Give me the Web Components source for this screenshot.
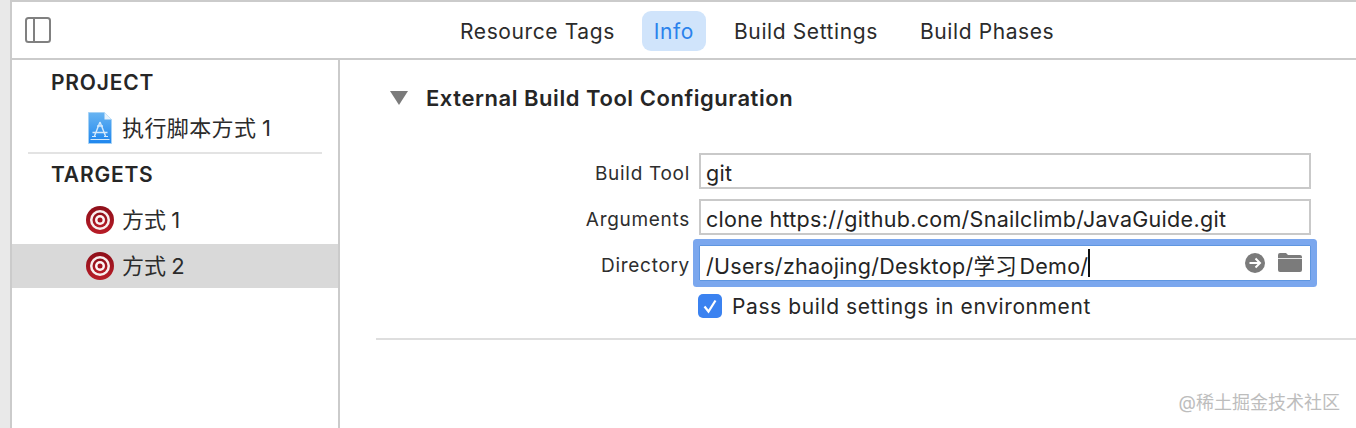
<!DOCTYPE html>
<html>
<head>
<meta charset="utf-8">
<style>
  html, body { margin: 0; padding: 0; height: 100%; background: #fff; }
  body { font-family: Inter, "Noto Sans CJK SC", sans-serif; color: #262626; overflow: hidden; }
</style>
</head>
<body>
<xcode-window>
  <tool-bar slot="toolbar">
    <tab-item>Resource Tags</tab-item>
    <tab-item selected>Info</tab-item>
    <tab-item>Build Settings</tab-item>
    <tab-item>Build Phases</tab-item>
  </tool-bar>
  <side-bar slot="sidebar">
    <side-heading>PROJECT</side-heading>
    <side-item icon="project">执行脚本方式 1</side-item>
    <side-rule></side-rule>
    <side-heading style="--h: 44px; --line: 42px">TARGETS</side-heading>
    <side-item icon="target">方式 1</side-item>
    <side-item icon="target" selected>方式 2</side-item>
  </side-bar>
  <config-panel slot="content" title="External Build Tool Configuration">
    <form-row label="Build Tool"><text-field value="git"></text-field></form-row>
    <form-row label="Arguments"><text-field value="clone https://github.com/Snailclimb/JavaGuide.git"></text-field></form-row>
    <form-row label="Directory"><text-field focused style="word-spacing: -4px" value="/Users/zhaojing/Desktop/学习 Demo/"></text-field></form-row>
    <form-row compact><check-box>Pass build settings in environment</check-box></form-row>
  </config-panel>
</xcode-window>
<water-mark>@稀土掘金技术社区</water-mark>

<script>
class XcodeWindow extends HTMLElement {
    constructor() {
        super();
        this.attachShadow({mode: 'open'});
        this.shadowRoot.innerHTML = `
          <style>
            :host { display: flex; width: 1356px; height: 428px; background: #e9e9e9; }
            .main {
              flex: 1;
              display: flex;
              flex-direction: column;
              margin-left: 10px;
              border-left: 2px solid #cbcbcb;
              border-top: 2px solid #cbcbcb;
              background: #fff;
              min-width: 0;
            }
            .body { flex: 1; display: flex; min-height: 0; }
          </style>
          <div class="main">
            <slot name="toolbar"></slot>
            <div class="body">
              <slot name="sidebar"></slot>
              <slot name="content"></slot>
            </div>
          </div>
        `;
    }
}

class ToolBar extends HTMLElement {
    constructor() {
        super();
        this.attachShadow({mode: 'open'});
        this.shadowRoot.innerHTML = `
          <style>
            :host {
              display: flex;
              align-items: center;
              height: 56px;
              border-bottom: 2px solid #cbcbcb;
              padding-left: 12px;
            }
            svg { display: block; width: 28px; height: 28px; flex: none; }
            .tabs { display: flex; align-items: center; margin: 2px 0 0 396px; }
          </style>
          <svg viewBox="0 0 28 28" fill="none" stroke="#808080" stroke-width="2">
            <rect x="2" y="2" width="24" height="24" rx="2.5"/>
            <path d="M10 2v24"/>
          </svg>
          <div class="tabs"><slot></slot></div>
        `;
    }
}

class TabItem extends HTMLElement {
    constructor() {
        super();
        this.attachShadow({mode: 'open'});
        this.shadowRoot.innerHTML = `
          <style>
            :host {
              display: block;
              height: 40px;
              line-height: 41px;
              padding: 0 12px;
              margin-right: 18px;
              border-radius: 9px;
              font-size: 21px;
              letter-spacing: 0.6px;
              color: #2b2b2b;
              white-space: nowrap;
            }
            :host([selected]) { background: #d0e4fb; color: #2a82ec; margin-right: 16px; margin-left: -3px; }
          </style>
          <slot></slot>
        `;
    }
}

class SideBar extends HTMLElement {
    constructor() {
        super();
        this.attachShadow({mode: 'open'});
        this.shadowRoot.innerHTML = `
          <style>
            :host {
              display: flex;
              flex-direction: column;
              box-sizing: border-box;
              width: 328px;
              flex: none;
              height: 100%;
              border-right: 2px solid #cbcbcb;
              background: #fff;
            }
          </style>
          <slot></slot>
        `;
    }
}

class SideHeading extends HTMLElement {
    constructor() {
        super();
        this.attachShadow({mode: 'open'});
        this.shadowRoot.innerHTML = `
          <style>
            :host {
              display: block;
              height: var(--h, 46px);
              line-height: var(--line, 46px);
              padding-left: 39px;
              font-size: 21px;
              font-weight: 600;
              letter-spacing: 0.8px;
              color: #262626;
            }
          </style>
          <slot></slot>
        `;
    }
}

class SideRule extends HTMLElement {
    constructor() {
        super();
        this.attachShadow({mode: 'open'});
        this.shadowRoot.innerHTML = `
          <style>
            :host { display: block; flex: none; height: 2px; margin: 2px 16px 0 16px; background: #e3e3e3; }
          </style>
        `;
    }
}

const PROJECT_ICON = `
  <svg viewBox="0 0 24 32" width="24" height="32">
    <defs>
      <linearGradient id="page" x1="0" y1="0" x2="0" y2="1">
        <stop offset="0" stop-color="#68b4f2"/>
        <stop offset="1" stop-color="#1f86ee"/>
      </linearGradient>
    </defs>
    <path d="M.5 .5h16l7 7v24H.5z" fill="url(#page)" stroke="#a5d2f6" stroke-width="1"/>
    <path d="M16.500 .5v7h7z" fill="#e6f2fc"/>
    <path d="M2.500 27.500h19" stroke="#d2e8fb" stroke-width="1"/>
    <path d="M12 10L6.500 24M12 10l5.500 14M4.500 20.500h15M9 14l6 0" stroke="#d6eafc" stroke-width="1.400" fill="none"/>
    <path d="M4 24.500h4M16 24.500h4" stroke="#d6eafc" stroke-width="1"/>
  </svg>`;

const TARGET_ICON = `
  <svg viewBox="0 0 28 28" width="28" height="28">
    <defs>
      <linearGradient id="ring" x1="0" y1="0" x2="0" y2="1">
        <stop offset="0" stop-color="#8e0f1a"/>
        <stop offset="1" stop-color="#b81c27"/>
      </linearGradient>
    </defs>
    <circle cx="14" cy="14" r="14" fill="url(#ring)"/>
    <circle cx="14" cy="14" r="10" fill="#f8eeee"/>
    <circle cx="14" cy="14" r="7.500" fill="url(#ring)"/>
    <circle cx="14" cy="14" r="5" fill="#fcf5f5"/>
    <circle cx="14" cy="14" r="2.500" fill="#a3131f"/>
  </svg>`;

class SideItem extends HTMLElement {
    constructor() {
        super();
        this.attachShadow({mode: 'open'});
        const icon = this.getAttribute('icon') === 'project' ? PROJECT_ICON : TARGET_ICON;
        this.shadowRoot.innerHTML = `
          <style>
            :host {
              display: flex;
              flex: none;
              align-items: center;
              height: 44px;
              font-size: 22px;
              word-spacing: -1px;
              color: #2b2b2b;
              white-space: nowrap;
            }
            :host([selected]) { background: #d9d9d9; margin-top: 2px; }
            :host([icon="project"]) { letter-spacing: 0.4px; }
            .icon { width: 36px; margin-left: 70px; margin-right: 4px; display: flex; justify-content: center; }
            .text { margin-bottom: 4px; }
            svg { display: block; }
          </style>
          <span class="icon">${icon}</span><span class="text"><slot></slot></span>
        `;
    }
}

class ConfigPanel extends HTMLElement {
    constructor() {
        super();
        this.attachShadow({mode: 'open'});
        this.shadowRoot.innerHTML = `
          <style>
            :host { display: block; flex: 1; min-width: 0; padding: 0 0 0 36px; }
            .head {
              display: flex;
              align-items: center;
              height: 76px;
              padding-left: 14px;
              font-size: 22px;
              font-weight: 600;
              letter-spacing: 0.55px;
              color: #262626;
            }
            svg { display: block; margin-right: 18px; }
            .form {
              display: flex;
              flex-direction: column;
              gap: 10px;
              padding-top: 17px;
              padding-bottom: 17px;
              border-bottom: 2px solid #dedede;
            }
          </style>
          <div class="head">
            <svg width="18" height="14" viewBox="0 0 18 14"><path d="M0 0h18l-9 14z" fill="#7b7b7b"/></svg>
            <span id="title"></span>
          </div>
          <div class="form"><slot></slot></div>
        `;
        this.shadowRoot.querySelector('#title').textContent = this.getAttribute('title');
    }
}

class FormRow extends HTMLElement {
    constructor() {
        super();
        this.attachShadow({mode: 'open'});
        this.shadowRoot.innerHTML = `
          <style>
            :host { display: flex; align-items: center; height: 36px; }
            :host([compact]) { height: 30px; }
            .label {
              width: 314px;
              flex: none;
              text-align: right;
              font-size: 19px;
              letter-spacing: 0.7px;
              color: #2e2e2e;
              margin: 4px 9px 0 0;
            }
          </style>
          <span class="label" id="label"></span><slot></slot>
        `;
        this.shadowRoot.querySelector('#label').textContent = this.getAttribute('label') || '';
    }
}

class TextField extends HTMLElement {
    constructor() {
        super();
        this.attachShadow({mode: 'open'});
        const focused = this.hasAttribute('focused');
        this.shadowRoot.innerHTML = `
          <style>
            :host {
              display: flex;
              align-items: center;
              box-sizing: border-box;
              width: 612px;
              height: 36px;
              padding: 0 5px;
              background: #fff;
              border: 2px solid #c9c9c9;
              font-size: 21.5px;
              letter-spacing: 0.3px;
              color: #242424;
              white-space: nowrap;
            }
            :host([focused]) {
              border: 1px solid #5f96e0;
              box-shadow: 0 0 0 6px #7ba7ee;
              border-radius: 1px;
              padding: 0 6px;
              position: relative;
            }
            #value { margin-top: 4px; }
            :host([focused]) #value { margin-top: 2px; }
            .caret { display: inline-block; flex: none; width: 2px; height: 28px; background: #111; }
            .tools { margin-left: auto; display: flex; align-items: center; gap: 13px; margin-right: 2px; }
            .folder { margin-bottom: 3px; }
            svg { display: block; }
          </style>
          <span id="value"></span>
          ${focused ? `<span class="caret"></span>
          <span class="tools">
            <svg width="20" height="20" viewBox="0 0 20 20">
              <circle cx="10" cy="10" r="10" fill="#7b7b7b"/>
              <path d="M4.500 10h10M10.500 5.500L15 10l-4.500 4.500" fill="none" stroke="#fff" stroke-width="2"/>
            </svg>
            <svg class="folder" width="24" height="20" viewBox="0 0 24 20">
              <path d="M0 3a2 2 0 0 1 2-2h6l2 2h12a2 2 0 0 1 2 2v13a2 2 0 0 1-2 2H2a2 2 0 0 1-2-2z" fill="#7b7b7b"/>
              <path d="M0 6.500h24" stroke="#e4e4e4" stroke-width="1"/>
            </svg>
          </span>` : ''}
        `;
        this.shadowRoot.querySelector('#value').textContent = this.getAttribute('value');
    }
}

class CheckBox extends HTMLElement {
    constructor() {
        super();
        this.attachShadow({mode: 'open'});
        this.shadowRoot.innerHTML = `
          <style>
            :host {
              display: flex;
              align-items: center;
              gap: 10px;
              margin-left: -1px;
              font-size: 21px;
              letter-spacing: 0.6px;
              color: #262626;
              white-space: nowrap;
            }
            svg { display: block; }
          </style>
          <svg width="24" height="24" viewBox="0 0 24 24">
            <rect width="24" height="24" rx="5" fill="#3b82f0"/>
            <path d="M6.500 12.500l4 5 7-11" fill="none" stroke="#fff" stroke-width="2.200"/>
          </svg>
          <slot></slot>
        `;
    }
}

class WaterMark extends HTMLElement {
    constructor() {
        super();
        this.attachShadow({mode: 'open'});
        this.shadowRoot.innerHTML = `
          <style>
            :host {
              position: absolute;
              right: 16px;
              top: 392px;
              font-size: 18px;
              line-height: 22px;
              color: #bdbdbd;
              white-space: nowrap;
            }
          </style>
          <slot></slot>
        `;
    }
}

customElements.define('xcode-window', XcodeWindow);
customElements.define('tool-bar', ToolBar);
customElements.define('tab-item', TabItem);
customElements.define('side-bar', SideBar);
customElements.define('side-heading', SideHeading);
customElements.define('side-rule', SideRule);
customElements.define('side-item', SideItem);
customElements.define('config-panel', ConfigPanel);
customElements.define('form-row', FormRow);
customElements.define('text-field', TextField);
customElements.define('check-box', CheckBox);
customElements.define('water-mark', WaterMark);
</script>
</body>
</html>
